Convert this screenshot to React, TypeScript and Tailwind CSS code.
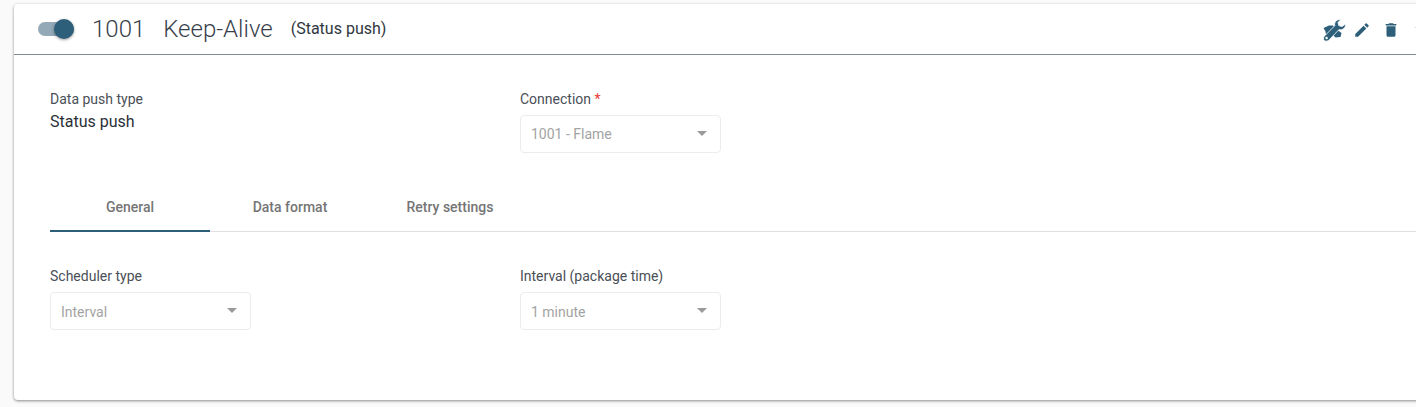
import React from "react";
import { MdEdit, MdDelete, MdExpandMore } from "react-icons/md";

function ToolsIcon() {
  return (
    <svg width="24" height="24" viewBox="0 0 24 24" className="mt-[2px] shrink-0">
      <path
        fill="currentColor"
        d="M1.5 10 L7 7.5 L11 7.5 L14 11 L19.5 15 L18.5 19 L13.5 19.5 L9.5 15.5 L7 17.5 L4 16.5 L3.5 13.5 Z"
      />
      <path
        fill="currentColor"
        stroke="#ffffff"
        strokeWidth="0.8"
        d="M23.5 6 C24 9.5 20.5 12.8 17 11.6 L8 21 C6.6 23.2 3.6 23.8 2.2 22.4 C0.8 21 1.4 18.4 3.6 17 L12.8 7.6 C11.8 4 15 1 18.8 1.6 L16 4.6 L16.8 7.6 L20 8.6 Z"
      />
      <circle cx="4.6" cy="20" r="1.2" fill="#ffffff" />
    </svg>
  );
}

function Select({ value, textClass }: { value: string; textClass?: string }) {
  return (
    <div className="flex h-[38px] w-[201px] items-center justify-between rounded-[4px] border border-[#ececec] pl-[10px] pr-[13px] text-[14px] text-[#a3a3a3]">
      <span className={textClass}>{value}</span>
      <span className="mb-[2px] h-0 w-0 border-x-[5px] border-t-[5px] border-x-transparent border-t-[#9a9a9a]" />
    </div>
  );
}

function Field({
  label,
  required,
  value,
  textClass,
}: {
  label: string;
  required?: boolean;
  value: string;
  textClass?: string;
}) {
  return (
    <div className="w-[470px]">
      <div className="mb-[6px] h-[20px] text-[14px] leading-[20px] text-[#4a4f57]">
        {label}
        {required && <span className="text-[#e53935]"> *</span>}
      </div>
      <Select value={value} textClass={textClass} />
    </div>
  );
}

export default function App() {
  return (
    <div className="h-[407px] w-[1416px] overflow-hidden bg-[#fafafa] pl-[14px] pt-[4px] font-['Roboto',sans-serif]">
      <div className="h-[396px] w-[1440px] rounded-[4px] bg-white shadow-[0_1px_3px_rgba(0,0,0,0.45)]">
        <header className="flex h-[51px] items-center border-b border-[#7f8c93] pl-[24px]">
          <div className="relative h-[14px] w-[36px] rounded-full bg-[#93a9b7]">
            <div className="absolute -top-[3px] right-0 h-[20px] w-[20px] rounded-full bg-[#2e5f7a] shadow-[0_1px_3px_rgba(0,0,0,0.4)]" />
          </div>
          <div className="ml-[18px] text-[24px] font-light leading-[28px] text-[#37404a]">1001</div>
          <div className="ml-[18px] text-[24px] font-light leading-[28px] text-[#37404a]">Keep-Alive</div>
          <div className="ml-[18px] text-[16px] leading-[20px] text-[#2f3640]">(Status push)</div>
          <div className="ml-auto flex items-center pr-[25px] text-[#2e5f7a]">
            <ToolsIcon />
            <MdEdit size={18} className="ml-[7px] mt-[2px]" />
            <MdDelete size={18} className="ml-[11px] mt-[2px]" />
            <MdExpandMore size={18} className="ml-[11px] text-[#5f6368]" />
          </div>
        </header>

        <div className="flex pl-[36px] pt-[34px]">
          <div className="w-[470px]">
            <div className="h-[20px] text-[14px] leading-[20px] text-[#4a4f57]">Data push type</div>
            <div className="mt-[3px] text-[16px] leading-[20px] text-[#2b3038]">Status push</div>
          </div>
          <Field label="Connection" required value="1001 - Flame" />
        </div>

        <nav className="ml-[36px] mt-[32px] flex h-[47px] border-b border-[#e0e0e0] text-[14px] font-medium text-[#757575]">
          <div className="relative flex h-[46px] w-[160px] items-center justify-center pb-[2px]">
            General
            <span className="absolute inset-x-0 -bottom-px h-[2px] bg-[#2e5f7a]" />
          </div>
          <div className="flex h-[46px] w-[160px] items-center justify-center pb-[2px]">Data format</div>
          <div className="flex h-[46px] w-[160px] items-center justify-center pb-[2px]">Retry settings</div>
        </nav>

        <div className="flex pl-[36px] pt-[34px]">
          <Field label="Scheduler type" value="Interval" textClass="pt-[2px]" />
          <Field label="Interval (package time)" value="1 minute" textClass="pt-[2px]" />
        </div>
      </div>
    </div>
  );
}
